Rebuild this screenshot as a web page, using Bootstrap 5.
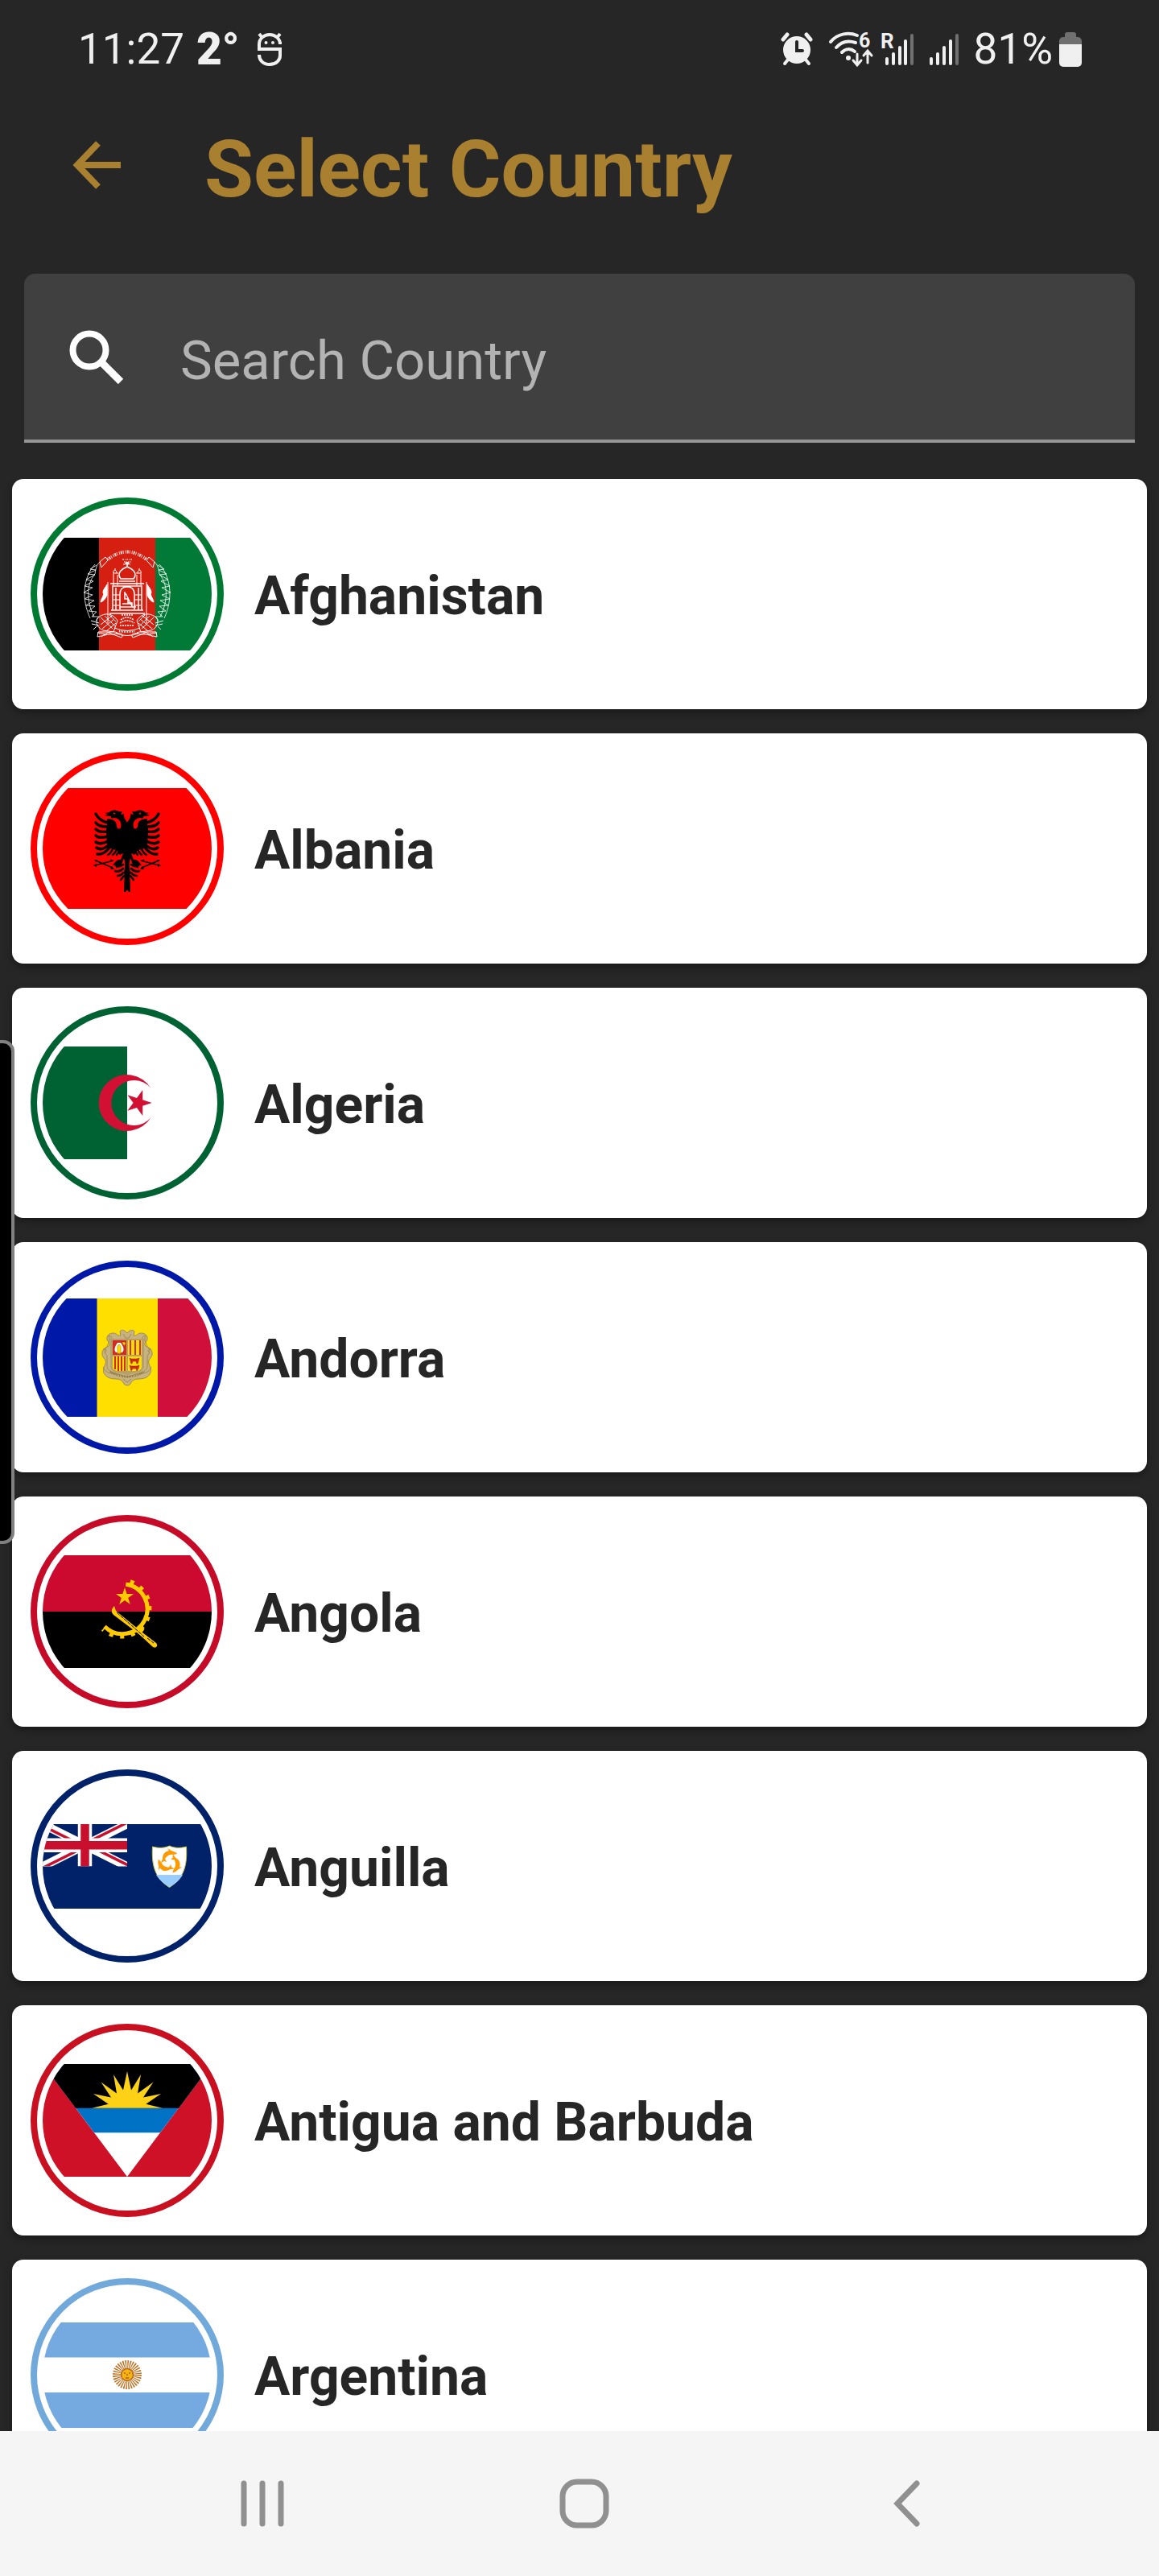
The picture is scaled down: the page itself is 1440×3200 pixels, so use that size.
<!DOCTYPE html>
<html lang="en">
<head>
<meta charset="utf-8">
<meta name="viewport" content="width=device-width, initial-scale=1">
<title>Select Country</title>
<link href="https://cdn.jsdelivr.net/npm/bootstrap@5.3.0/dist/css/bootstrap.min.css" rel="stylesheet">
<style>
  body { font-family: Roboto, "Noto Sans", sans-serif; background: #262626; color: #f0f0f0; }
  .status-bar { height: 122px; padding: 0 96px 0 97px; font-size: 53px; line-height: 62px; }
  .temperature { font-size: 55px; font-weight: 900; margin: 0 22px 0 15px; }
  .status-icons { gap: 18px; }
  .network-icons { gap: 8px; }
  .battery-group { gap: 8px; }
  .app-header { height: 188px; padding: 0 90px 22px; color: #a88030; gap: 104px; }
  .app-header h1 { font-size: 99px; line-height: 120px; font-weight: 700; padding-top: 10px; }
  .icon-btn { background: none; border: 0; padding: 0; color: inherit; line-height: 0; }
  .search-wrap { padding: 30px 30px 45px; }
  .search-box { height: 210px; background: #404040; border-bottom: 4px solid #959595; border-radius: 14px 14px 0 0; padding: 0 56px; gap: 70px; }
  .search-box .form-control { font-size: 67px; line-height: 80px; color: #fff; background: none; border: 0; padding: 10px 0 0; box-shadow: none; }
  .search-box .form-control::placeholder { color: #b3b3b3; opacity: 1; }
  .country-list { min-height: 0; overflow-y: auto; scrollbar-width: none; padding: 0 15px; gap: 30px; }
  .country-list::-webkit-scrollbar { display: none; }
  .country { border: 0; border-radius: 14px; padding: 23px; gap: 38px; color: #262626; background: #fff; box-shadow: 0 4px 10px rgba(0,0,0,.35); font-size: 66px; line-height: 80px; font-weight: 700; text-decoration: none; }
  .country > svg { width: 240px; height: 240px; flex: none; }
  .country span { padding-top: 6px; }
  .system-nav { height: 180px; padding-left: 12px; background: #f5f5f5; color: #909090; }
  .system-nav .icon-btn { width: 28%; }
  .edge-handle { left: 0; top: 1292px; width: 18px; height: 626px; background: #000; border: 4px solid #808080; border-left: 0; border-radius: 0 14px 14px 0; }
</style>
</head>
<body>
<div class="d-flex flex-column vh-100 overflow-hidden position-relative">

  <div class="status-bar d-flex align-items-center flex-shrink-0">
    <span>11:27</span>
    <span class="temperature">2°</span>
    <svg width="30" height="42" viewBox="0 0 30 42" fill="none" stroke="#f0f0f0" stroke-width="4" aria-hidden="true">
      <path d="M28 15C28 8 22 3 15 3S2 8 2 15v6h26v8c0 6-5 11-13 11S2 35 2 28"/>
      <path d="M2 2l4 5M28 2l-4 5M28 12v3" stroke-width="4"/>
      <circle cx="10.500" cy="13" r="2" fill="#f0f0f0" stroke="none"/><circle cx="19" cy="13" r="2" fill="#f0f0f0" stroke="none"/>
    </svg>
    <div class="status-icons d-flex align-items-center ms-auto">
      <svg width="40" height="42" viewBox="0 0 40 42" fill="none" stroke="#f0f0f0" stroke-linecap="round" aria-hidden="true">
        <circle cx="20" cy="22" r="17" fill="#f0f0f0" stroke="none"/>
        <path d="M3 9l5-6M37 9l-5-6" stroke-width="5"/><path d="M9 34l-4 5M31 34l4 5" stroke-width="4"/>
        <path d="M20 12v11h7" stroke="#262626" stroke-width="4"/>
      </svg>
      <div class="network-icons d-flex align-items-center">
        <svg width="58" height="56" viewBox="0 -6 58 56" fill="none" stroke="#f0f0f0" stroke-width="4" stroke-linecap="round" aria-hidden="true">
          <path d="M4 13C13 2 27 1 37 5M11 20c7-8 15-9 24-6M18 26c5-5 11-5 16-1"/>
          <circle cx="26" cy="33" r="3" fill="#f0f0f0" stroke="none"/>
          <path d="M37 28v13M32 36l5 6 5-6M50 39V25M45 30l5-6 5 6" stroke-width="3"/>
          <text x="39" y="20" font-family="Roboto" font-size="25" font-weight="700" fill="#f0f0f0" stroke="none">6</text>
        </svg>
        <svg width="42" height="56" viewBox="0 -7 42 56" stroke="#f0f0f0" stroke-width="4" stroke-linecap="round" aria-hidden="true">
          <path d="M8 33v6M16 27v12M24 19v20M31 11v28"/><path d="M39 4v35" stroke="#707070"/>
          <text x="0" y="20" font-family="Roboto" font-size="26" font-weight="700" fill="#f0f0f0" stroke="none">R</text>
        </svg>
      </div>
      <svg width="38" height="42" viewBox="0 0 38 42" stroke="#f0f0f0" stroke-width="4" stroke-linecap="round" aria-hidden="true">
        <path d="M3 33v6M11 27v12M19 19v20M27 11v28"/><path d="M35 4v35" stroke="#707070"/>
      </svg>
      <div class="battery-group d-flex align-items-center">
        <span>81%</span>
        <svg width="28" height="43" viewBox="0 0 28 43" aria-hidden="true">
          <path d="M0 16V11a5 5 0 0 1 5-5h2V3a3 3 0 0 1 3-3h8a3 3 0 0 1 3 3v3h2a5 5 0 0 1 5 5v5z" fill="#707070"/>
          <path d="M0 15h28v23a5 5 0 0 1-5 5H5a5 5 0 0 1-5-5z" fill="#f0f0f0"/>
        </svg>
      </div>
    </div>
  </div>

  <header class="app-header d-flex align-items-center flex-shrink-0">
    <button class="icon-btn" type="button" aria-label="Back">
      <svg width="60" height="60" viewBox="0 0 60 60" fill="none" stroke="currentColor" stroke-width="8"><path d="M60 30H8M32 3L6 30l26 27"/></svg>
    </button>
    <h1 class="m-0">Select Country</h1>
  </header>

  <div class="search-wrap flex-shrink-0">
    <div class="search-box d-flex align-items-center">
      <label for="country-search" class="lh-1">
        <svg class="d-block" width="68" height="68" viewBox="0 0 68 68" fill="none" stroke="#fff" stroke-width="8" aria-label="Search"><circle cx="25" cy="26" r="20.500"/><path d="M39 40l25 25" stroke-width="9"/></svg>
      </label>
      <input id="country-search" class="form-control" type="text" placeholder="Search Country">
    </div>
  </div>

  <main class="country-list d-flex flex-column flex-grow-1">
    <a class="country card flex-row align-items-center flex-shrink-0" href="#afghanistan">
      <svg viewBox="0 0 240 240" aria-hidden="true">
        <defs>
          <clipPath id="disc"><circle cx="120" cy="120" r="105"/></clipPath>
          <g id="af-half" fill="none" stroke="#fff" stroke-width="1">
            <path d="M80 83c-15 17-17 43-6 67M86 80c-4 4-5 8-6 15-12 14-10 36-1 53" stroke-opacity=".8"/>
            <path d="M82 84l-8 5 7 1-10 5 9 1-11 6 9 2-11 6 10 2-11 6 11 3-10 5 12 2-10 6 11 1-8 6 10 1-6 6 9 0-4 5" stroke-opacity=".8"/>
            <path d="M86 80l7-6 3 4-8 9zM83 150c10-9 20-5 25 3l-5 14-13-2c-8-4-9-9-7-15z"/>
            <path d="M87 149l15 14M92 147l13 13M98 146l8 8M87 158l14-11M89 163l15-12M94 166l12-10"/>
            <path d="M75 153l10 3M76 157l9 2M82 160l-4 4M84 167l-1 6c8-1 15-5 22-2l8 3c4-5-3-7-10-4l-8-3zM83 168l12 2M88 173c6-5 13-8 20-5"/>
            <path d="M103 95v14M108 96v13M102 94h7M103 94c-1-5 4-5 4 0M105 88v3M96 105v51" />
            <path d="M95 108c-2 4-5 6-5 10 2 4-2 6-3 12 4-1 7-6 8-9v-13" fill="#fff"/>
            <path d="M99 107h21M101 110h19M102 111v29M106 112v28M100 140h20M98 144h22M111 139v-19c0-7 4-9 9-9" stroke-width="1.500"/>
            <path d="M102 121h8M103 127h8M103 134h8" stroke-width="1"/>
          </g>
        </defs>
        <g clip-path="url(#disc)">
          <path fill="#000" d="M15 50h70v140H15z"/><path fill="#d52011" d="M85 50h70v140H85z"/><path fill="#007a36" d="M155 50h70v140h-70z"/>
        </g>
        <use href="#af-half"/><use href="#af-half" transform="matrix(-1 0 0 1 240 0)"/>
        <path d="M112 101c-6-8 3-13 8-15 5 2 14 7 8 15zM110 104h20M120 86v-5M118 83c0-3 4-3 4 0" fill="none" stroke="#fff" stroke-width="1.500"/>
        <path d="M117 117v9h4v5h5v5h5M118 119l9 18M111 136h15M114 132h10" fill="none" stroke="#fff" stroke-width="1.500"/>
        <path d="M96 77q24-19 48 0" fill="none" stroke="#fff" stroke-opacity=".8" stroke-width="4" stroke-dasharray="1 1 2 1 1 2"/>
        <path d="M114 77h12M116 80h9M115 83h10" stroke="#fff" stroke-width="1" stroke-dasharray="2 1 1 1"/>
        <path d="M113 146h14M112 152q8-6 16 0M111 156q9-6 18 0M111 159h18" fill="none" stroke="#fff" stroke-width="1.500" stroke-dasharray="2 1"/>
        <path d="M104 162q16 7 32 0M106 169q14 5 28 0" fill="none" stroke="#fff"/><path d="M110 166q10 2 20 0" fill="none" stroke="#fff" stroke-width="2" stroke-dasharray="1 1"/>
        <circle cx="120" cy="120" r="116" fill="none" stroke="#007a33" stroke-width="8"/>
      </svg>
      <span>Afghanistan</span>
    </a>

    <a class="country card flex-row align-items-center flex-shrink-0" href="#albania">
      <svg viewBox="0 0 240 240" aria-hidden="true">
        <path fill="red" clip-path="url(#disc)" d="M15 45h210v150H15z"/>
        <defs><g id="al-half">
          <path d="M121 90c-2-5-6-8-5-13l-4 1 2-4c-3 0-5 0-7-1-4-1-8 0-9 2l-6 1 4 1-4 2 8 1c-1 2 1 3 4 2 5 0 10 5 8 12-2 3-5 1-5-2 0-7-6-9-12-9v9l-1 4 1 22 7 3 5 1 4 6 4-2-3 8c-4-1-7 3-10 7h5l-1 4 7-5 3-8 2 8-2 10 2 8-1 9 5 7h2z"/>
          <g fill="none" stroke="#000" stroke-width="3.500" stroke-linecap="round">
            <path d="M96 88c-8-2-12-5-15-11M96 93c-8 0-12-1-15-5M96 99c-7 1-12 0-15-3M96 105c-7 2-12 2-15-1M96 111c-6 3-11 4-15 1M97 116c-5 4-11 6-15 3M98 119c-4 5-10 9-15 8" />
            <path d="M102 121c-2 4-4 6-6 7M107 121c-1 4-3 5-5 7M110 124l-3 4M115 140c-4 3-8 3-10 0M115 145c-3 3-7 4-10 3M115 150c-2 3-4 4-7 4M116 154l-4 5" stroke-width="2.500"/>
          </g>
          <path d="M80 141l23-6M81 135l21 9" fill="none" stroke="#000" stroke-width="1.500"/>
          <path d="M78 141l4-2v4zM79 134l4 0-1 3zM101 142l3 4h-5zM99 133l3 2-3 2z"/>
        </g></defs>
        <use href="#al-half"/><use href="#al-half" transform="matrix(-1 0 0 1 240 0)"/>
        <path d="M103 76l2 1M137 76l-2 1" stroke="red" stroke-width="1.500"/>
        <circle cx="120" cy="120" r="116" fill="none" stroke="red" stroke-width="8"/>
      </svg>
      <span>Albania</span>
    </a>

    <a class="country card flex-row align-items-center flex-shrink-0" href="#algeria">
      <svg viewBox="0 0 240 240" aria-hidden="true">
        <path fill="#006233" clip-path="url(#disc)" d="M15 50h105v140H15z"/>
        <path fill="#d21034" d="M149.500 101.700A35 35 0 1 0 149.500 138.300A28 28 0 1 1 149.500 101.700zM150.700 120l-11.500 3.800 0 12.100-7.200-9.800-11.600 3.700 7.200-9.800-7.200-9.800 11.600 3.700 7.200-9.800 0 12.100z"/>
        <circle cx="120" cy="120" r="116" fill="none" stroke="#006233" stroke-width="8"/>
      </svg>
      <span>Algeria</span>
    </a>

    <a class="country card flex-row align-items-center flex-shrink-0" href="#andorra">
      <svg viewBox="0 0 240 240" aria-hidden="true">
        <g clip-path="url(#disc)"><path fill="#0018a8" d="M15 47h68v147H15z"/><path fill="#fedf00" d="M82.500 47H158v147H82.500z"/><path fill="#d0103a" d="M158 47h67v147h-67z"/></g>
        <path d="M120 90c4-5 8-4 9-2l-1 5c4 1 5-3 9-3 5 0 9 3 8 8-1 3-4 4-3 7 1 2 4 2 6 4 4 3 4 9 1 12-2 2-3 4-2 7 2 5 4 9 1 13-3 5-9 6-15 6-4 0-6 2-8 4-1 3-3 4-5 4s-4-1-5-4c-2-2-4-4-8-4-6 0-12-1-15-6-3-4-1-8 1-13 1-3 0-5-2-7-3-3-3-9 1-12 2-2 5-2 6-4 1-3-2-4-3-7-1-5 3-8 8-8 4 0 5 4 9 3l-1-5c1-2 5-3 9 2z" fill="#c7b37f" stroke="#a08a55" stroke-width="1"/>
        <path d="M98 94v5l-3 8c-4 3-4 7 0 11v13c0 6 7 9 15 10l10 4 10-4c8-1 15-4 15-10v-13c4-4 4-8 0-11l-3-8v-5M96 94c4-2 5 1 5 3M144 94c-4-2-5 1-5 3M90 110c4-1 5 2 3 4M150 110c-4-1-5 2-3 4M90 132c3 8 10 8 16 9M150 132c-3 8-10 8-16 9M115 91l3 5h4l3-5M115 147l5 4 5-4" fill="none" stroke="#a08a55" stroke-width="1"/>
        <path d="M99 97h42v34c0 5-5 8-9 8l-12 3-12-3c-4 0-9-3-9-8z" fill="#b5a06b"/>
        <path fill="#d52b1e" d="M102 99h17v18h-17z"/><path fill="#fedf00" d="M121 99h17v18h-17zM102 119h17v18h-10c-4 0-7-2-7-5zM121 119h17v13c0 3-3 5-7 5h-10z"/>
        <path d="M124 99v18M130 99v18M136 99v18M105 119v16M109 119v18M113 119v18M117 119v18" stroke="#d52b1e" stroke-width="2"/>
        <path d="M106 114c-3-3-1-8 2-12h4c3 4 5 9 2 12z" fill="#fff"/><path d="M108 106l2-2 2 3v8h-4zM114 102c5-2 4 3 2 3" fill="#fedf00" stroke="#d8a900" stroke-width="1"/>
        <path d="M123 121l2 1h7l3-1-1 4-1 3h-1l-1-3h-4l-1 3h-1zM123 130l2 1h7l3-1-1 4-2 3-1-3h-4l-2 3z" fill="#d52b1e" stroke="#8c211d" stroke-width=".5"/>
        <path d="M99 138q21 12 42 0" fill="none" stroke="#8f7845" stroke-width="3" stroke-dasharray="1 1"/>
        <circle cx="120" cy="120" r="116" fill="none" stroke="#0018a8" stroke-width="8"/>
      </svg>
      <span>Andorra</span>
    </a>

    <a class="country card flex-row align-items-center flex-shrink-0" href="#angola">
      <svg viewBox="0 0 240 240" aria-hidden="true">
        <g clip-path="url(#disc)"><path fill="#cc092f" d="M15 50h210v70H15z"/><path fill="#000" d="M15 120h210v70H15z"/></g>
        <g fill="none" stroke="#ffcb00"><path d="M118.300 86A31 31 0 1 1 92 138.500" stroke-width="5"/><path d="M119 81.500A35 35 0 1 1 89.500 142" stroke-width="5" stroke-dasharray="5 8.600" stroke-dashoffset="-5"/></g>
        <path fill="#ffcb00" d="M117 90l2.600 8h8.400l-6.800 5 2.600 8-6.800-5-6.800 5 2.600-8-6.800-5h8.400z"/>
        <path fill="#ffcb00" d="M104 113l2 6 33 27 4 3 13 10c3 3 0 7-4 5l-14-13-6-5-29-22c-4-4-2-8 1-11z"/>
        <path d="M107 121l34 30M145 153l8 6" stroke="#000" stroke-width="1" stroke-dasharray="5 1"/><path d="M133 139l7 5" stroke="#ffcb00" stroke-width="5"/>
        <circle cx="120" cy="120" r="116" fill="none" stroke="#c60b28" stroke-width="8"/>
      </svg>
      <span>Angola</span>
    </a>

    <a class="country card flex-row align-items-center flex-shrink-0" href="#anguilla">
      <svg viewBox="0 0 240 240" aria-hidden="true">
        <defs><clipPath id="uj"><path d="M30 15h30v15zv15H0zH0V0zV0h30z"/></clipPath></defs>
        <g clip-path="url(#disc)">
          <path fill="#012169" d="M15 68h210v105H15z"/>
          <svg x="15" y="68" width="105" height="52.500" viewBox="0 0 60 30">
            <path d="M0 0l60 30M60 0L0 30" stroke="#fff" stroke-width="6"/>
            <path d="M0 0l60 30M60 0L0 30" clip-path="url(#uj)" stroke="#c8102e" stroke-width="4"/>
            <path d="M30 0v30M0 15h60" stroke="#fff" stroke-width="10"/><path d="M30 0v30M0 15h60" stroke="#c8102e" stroke-width="6"/>
          </svg>
        </g>
        <path d="M151.500 96c7 2 15 2 21-1 6 3 14 3 21 1 1 20-1 38-21 50.500C152.500 134 150.500 116 151.500 96z" fill="#fff" stroke="#c9cc3f" stroke-width="1"/>
        <path d="M156 131h33c-4 7-9 11-16.500 15-7-4-12-8-16.500-15z" fill="#9cf"/>
        <g fill="#ff9900"><path id="dolphin" d="M164 111c0-6 3-9 8-10l-2-3 5 3c4 1 7 3 7 4l-5 1c-6-1-8 3-10 5l2 4-3-1-4 2z"/><use href="#dolphin" transform="rotate(120 172.500 115)"/><use href="#dolphin" transform="rotate(240 172.500 115)"/></g>
        <circle cx="120" cy="120" r="116" fill="none" stroke="#012169" stroke-width="8"/>
      </svg>
      <span>Anguilla</span>
    </a>

    <a class="country card flex-row align-items-center flex-shrink-0" href="#antigua-and-barbuda">
      <svg viewBox="0 0 240 240" aria-hidden="true">
        <g clip-path="url(#disc)">
          <path fill="#ce1126" d="M15 50h210v140H15z"/><path fill="#fff" d="M15 50h210L120 190z"/>
          <path fill="#0072c6" d="M15 50h210l-64 85.300H79z"/><path fill="#000" d="M15 50h210l-41 54.700H56z"/>
        </g>
        <path fill="#fcd116" d="M76 104.700l20.700-5L78 87l22 4.500-12.500-19 19.500 14L103 63l12 19.500L120 59l5 23.500L137 63l-4 23.500 19.500-14-12.500 19L162 87l-18.700 12.700 20.700 5z"/>
        <circle cx="120" cy="120" r="116" fill="none" stroke="#c81020" stroke-width="8"/>
      </svg>
      <span>Antigua and Barbuda</span>
    </a>

    <a class="country card flex-row align-items-center flex-shrink-0" href="#argentina">
      <svg viewBox="0 0 240 240" aria-hidden="true">
        <path fill="#74aadf" clip-path="url(#disc)" d="M15 55h210v43.500H15zM15 142h210v44H15z"/>
        <circle cx="120" cy="120" r="13" fill="none" stroke="#c07020" stroke-width="10" stroke-dasharray="1.300 1.250"/>
        <circle cx="120" cy="120" r="7.500" fill="#f6b40e" stroke="#b5651d" stroke-width="1.500"/>
        <path d="M116 118h2M122 118h2M120 119v2M118 124h4" stroke="#85340a" stroke-width="1"/>
        <circle cx="120" cy="120" r="116" fill="none" stroke="#71a9da" stroke-width="8"/>
      </svg>
      <span>Argentina</span>
    </a>
  </main>

  <nav class="system-nav d-flex align-items-center justify-content-center flex-shrink-0" aria-label="System">
    <button class="icon-btn" type="button" aria-label="Recent apps"><svg width="54" height="58" viewBox="0 0 54 58" stroke="currentColor" stroke-width="7" stroke-linecap="round"><path d="M4 4v50M27 4v50M50 4v50"/></svg></button>
    <button class="icon-btn" type="button" aria-label="Home"><svg width="62" height="62" viewBox="0 0 62 62" fill="none" stroke="currentColor" stroke-width="7"><rect x="4" y="4" width="54" height="54" rx="18"/></svg></button>
    <button class="icon-btn" type="button" aria-label="Back"><svg width="34" height="58" viewBox="0 0 34 58" fill="none" stroke="currentColor" stroke-width="7" stroke-linecap="round"><path d="M30 4L6 29l24 25"/></svg></button>
  </nav>

  <div class="edge-handle position-absolute"></div>
</div>
<script src="https://cdn.jsdelivr.net/npm/bootstrap@5.3.0/dist/js/bootstrap.bundle.min.js"></script>
</body>
</html>
